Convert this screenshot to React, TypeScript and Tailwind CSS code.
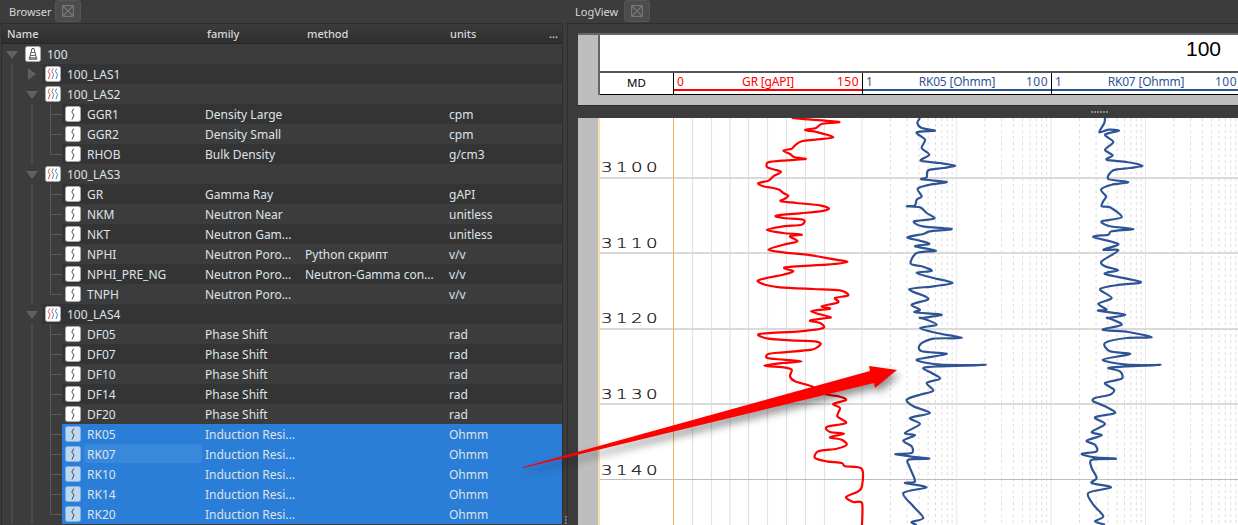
import React from "react";

type Row = { level: 0 | 1 | 2; kind: "well" | "las" | "curve"; name: string; family?: string; method?: string; units?: string; open?: boolean; last?: boolean; selected?: boolean; hover?: boolean; };

const c = (name: string, family: string, units: string, extra: Partial<Row> = {}): Row => ({ level: 2, kind: "curve", name, family, units, ...extra });
const las = (name: string, open: boolean): Row => ({ level: 1, kind: "las", name, open });

const rows: Row[] = [
  { level: 0, kind: "well", name: "100", open: true },
  las("100_LAS1", false),
  las("100_LAS2", true),
  c("GGR1", "Density Large", "cpm"),
  c("GGR2", "Density Small", "cpm"),
  c("RHOB", "Bulk Density", "g/cm3", { last: true }),
  las("100_LAS3", true),
  c("GR", "Gamma Ray", "gAPI"),
  c("NKM", "Neutron Near", "unitless"),
  c("NKT", "Neutron Gam...", "unitless"),
  c("NPHI", "Neutron Poro...", "v/v", { method: "Python скрипт" }),
  c("NPHI_PRE_NG", "Neutron Poro...", "v/v", { method: "Neutron-Gamma con..." }),
  c("TNPH", "Neutron Poro...", "v/v", { last: true }),
  las("100_LAS4", true),
  c("DF05", "Phase Shift", "rad"),
  c("DF07", "Phase Shift", "rad"),
  c("DF10", "Phase Shift", "rad"),
  c("DF14", "Phase Shift", "rad"),
  c("DF20", "Phase Shift", "rad"),
  c("RK05", "Induction Resi...", "Ohmm", { selected: true }),
  c("RK07", "Induction Resi...", "Ohmm", { selected: true, hover: true }),
  c("RK10", "Induction Resi...", "Ohmm", { selected: true }),
  c("RK14", "Induction Resi...", "Ohmm", { selected: true }),
  c("RK20", "Induction Resi...", "Ohmm", { selected: true, last: true }),
];

const Z1: number[][] = [[155,0],[215,5],[298,12],[245,18],[228,30],[195,36],[230,42],[280,58],[225,65],[185,70],[165,82],[155,92],[130,98],[150,108],[165,118],[197,123],[140,127],[85,133],[82,148],[105,155],[123,162],[100,175],[85,188],[55,196],[70,205],[100,210],[118,215],[130,225],[145,233],[135,242],[122,250],[170,255],[240,262],[267,272],[240,280],[180,286],[108,293],[130,300],[190,305],[185,320],[130,325],[80,336],[130,345],[185,350],[150,355],[172,370],[130,380],[85,395],[130,403],[200,410],[270,422],[322,432],[260,440],[135,448],[160,460],[130,470],[90,478],[53,488],[75,500],[120,508],[220,513],[300,517],[325,532],[285,540],[295,553],[245,565],[270,572],[213,580],[270,597]];
const Z2: number[][] = [[260,0],[210,8],[240,15],[250,30],[180,40],[58,48],[85,62],[170,68],[225,70],[242,78],[215,95],[130,103],[85,108],[82,120],[130,125],[185,130],[130,135],[73,143],[130,148],[155,155],[150,175],[165,190],[215,205],[255,228],[300,236],[318,246],[280,258],[300,270],[292,295],[318,315],[260,327],[270,342],[312,347],[270,358],[305,365],[320,380],[290,392],[235,400],[225,420],[260,430],[305,435],[315,445],[365,452],[366,505],[355,520],[318,537],[340,552],[366,555],[366,621]];
const B1: number[][] = [[540,0],[532,15],[545,30],[585,38],[530,43],[555,65],[545,90],[568,110],[542,128],[600,135],[645,143],[610,150],[565,157],[560,178],[545,184],[620,192],[570,200],[533,212],[545,235],[530,245],[525,262],[500,265],[540,268],[560,285],[583,302],[522,310],[548,325],[635,333],[570,340],[550,348],[502,358],[540,368],[568,378],[525,385],[588,398],[530,405],[512,437],[545,445],[575,458],[530,465],[580,480],[638,495],[580,505],[508,514],[555,535],[563,545],[515,560],[540,575],[525,583],[605,590],[545,600]];
const B2: number[][] = [[545,0],[590,20],[540,30],[590,45],[665,60],[580,62],[540,80],[545,100],[620,108],[530,125],[600,140],[738,141],[600,145],[550,150],[575,165],[600,182],[560,195],[580,218],[540,230],[500,245],[520,265],[570,285],[510,300],[540,318],[495,345],[525,352],[490,368],[515,385],[515,405],[466,408],[510,415],[568,422],[505,425],[510,450],[525,490],[495,495],[560,508],[490,525],[520,565],[550,600],[515,612],[530,621]];
const K1: number[][] = [[195,0],[193,15],[178,43],[205,35],[237,38],[195,50],[220,72],[195,95],[218,112],[200,125],[260,132],[307,143],[270,150],[220,157],[205,183],[265,192],[215,200],[183,215],[198,235],[190,250],[185,265],[210,268],[245,298],[185,310],[210,325],[280,333],[215,340],[205,350],[160,357],[235,378],[190,395],[235,397],[185,430],[195,445],[235,457],[195,468],[302,492],[240,500],[180,513],[215,540],[175,557],[200,575],[175,578],[255,590],[205,600]];
const K2: number[][] = [[205,0],[245,20],[188,35],[265,42],[335,58],[260,60],[195,75],[210,100],[270,108],[188,125],[260,140],[362,141],[260,145],[205,150],[240,160],[245,182],[195,195],[222,215],[210,230],[165,240],[160,250],[195,265],[225,285],[165,298],[195,318],[155,342],[185,352],[140,368],[165,380],[170,400],[125,408],[165,418],[228,422],[155,425],[155,450],[170,480],[155,495],[213,508],[145,525],[160,560],[190,595],[165,610],[195,620]];

const smooth = (a: number[][], b: number[][], x0: number) => {
  const p = [...a.map(([x, y]) => [x0 + x / 3, 118 + y / 3]), ...b.map(([x, y]) => [x0 + x / 3, 318 + y / 3])];
  const t = 0.14;
  let d = `M${p[0][0].toFixed(1)} ${p[0][1].toFixed(1)}`;
  for (let i = 0; i < p.length - 1; i++) {
    const p0 = p[Math.max(0, i - 1)];
    const p1 = p[i];
    const p2 = p[i + 1];
    const p3 = p[Math.min(p.length - 1, i + 2)];
    const c1x = p1[0] + (p2[0] - p0[0]) * t;
    const c1y = p1[1] + (p2[1] - p0[1]) * t;
    const c2x = p2[0] - (p3[0] - p1[0]) * t;
    const c2y = p2[1] - (p3[1] - p1[1]) * t;
    d += `C${c1x.toFixed(1)} ${c1y.toFixed(1)} ${c2x.toFixed(1)} ${c2y.toFixed(1)} ${p2[0].toFixed(1)} ${p2[1].toFixed(1)}`;
  }
  return d;
};

const Tri = ({ open }: { open?: boolean }) =>
  open ? (
    <svg width="12" height="8" viewBox="0 0 12 8" className="shrink-0"><path d="M0 0H12L6 8Z" fill="#606060" /></svg>
  ) : (
    <svg width="8" height="12" viewBox="0 0 8 12" className="shrink-0"><path d="M0 0L8 6L0 12Z" fill="#606060" /></svg>
  );

const Icon = ({ kind, selected }: { kind: Row["kind"]; selected?: boolean }) => (
  <svg width="16" height="16" viewBox="0 0 16 16" className="shrink-0">
    <rect x="0.5" y="0.5" width="15" height="15" rx="2" fill={selected ? "#bcd8f3" : "#ffffff"} stroke={selected ? "#7fb0e4" : "#a8a8a8"} />
    {kind === "curve" && <path d="M8.8 2.5L6.8 6L9 9L7 13.5" fill="none" stroke="#4a4a4a" strokeWidth="1" />}
    {kind === "las" && (
      <g fill="none" strokeWidth="1">
        <path d="M4.8 2.5L3.2 5.5L5 8.5L3.4 13" stroke="#e2524f" />
        <path d="M8.2 2.5L6.8 5.5L8.7 8.5L7.2 13" stroke="#7a7a7a" />
        <path d="M11.6 2.5L10.4 5.5L12.6 8.5L11 13" stroke="#3f7fd0" />
      </g>
    )}
    {kind === "well" && (
      <g fill="none" stroke="#555555">
        <path d="M7 2.5H9L11.5 12.5H4.5Z" strokeWidth="1" />
        <path d="M6.2 6.5H9.8M5.4 9.5H10.6" strokeWidth="0.9" />
        <path d="M4 11.5H12V13.5H4Z" fill="#8a8a8a" strokeWidth="0.5" />
      </g>
    )}
  </svg>
);

const nameWidth = { 0: "w-[183px]", 1: "w-[163px]", 2: "w-[143px]" };

const TreeRow = ({ row, index }: { row: Row; index: number }) => {
  const striped = index % 2 === 1;
  const bg = row.selected ? "bg-[#2a7ed8]" : striped ? "bg-[#343434]" : "bg-[#3c3c3c]";
  return (
    <div className="flex h-5 w-full text-[12px] leading-5">
      <div className="relative h-5 w-5 shrink-0">
        {row.level > 0 && <div className="absolute left-[9px] top-0 bottom-0 w-[2px] bg-[#4a4a4a]" />}
        {row.level === 0 && <div className="absolute left-[4px] top-[7px] flex"><Tri open /></div>}
      </div>
      {row.level >= 1 && (
        <div className="relative h-5 w-5 shrink-0">
          {row.level === 2 && <div className="absolute left-[9px] top-0 bottom-0 w-[2px] bg-[#4a4a4a]" />}
          {row.level === 1 && <div className={row.open ? "absolute left-[4px] top-[7px] flex" : "absolute left-[6px] top-[4px] flex"}><Tri open={row.open} /></div>}
        </div>
      )}
      {row.level === 2 && (
        <div className="relative h-5 w-5 shrink-0">
          <div className={row.last ? "absolute left-[8px] top-0 h-[11px] w-px bg-[#5a5a5a]" : "absolute left-[8px] top-0 bottom-0 w-px bg-[#5a5a5a]"} />
          <div className="absolute left-[8px] right-0 top-[10px] h-px bg-[#5a5a5a]" />
        </div>
      )}
      <div className={`relative flex flex-1 min-w-0 items-center ${bg} text-[#dfe3e8]`}>
        {row.hover && <div className="absolute left-[22px] top-0 h-[19px] w-[118px] rounded-[2px] bg-[#3a88dc]" />}
        <div className={`relative flex shrink-0 items-center gap-[6px] pl-[3px] ${nameWidth[row.level]}`}>
          <Icon kind={row.kind} selected={row.selected} />
          <span className="whitespace-nowrap pt-px">{row.name}</span>
        </div>
        <div className="relative w-[100px] shrink-0 whitespace-nowrap pt-px">{row.family}</div>
        <div className="relative w-[144px] shrink-0 whitespace-nowrap pt-px">{row.method}</div>
        <div className="relative whitespace-nowrap pt-px">{row.units}</div>
      </div>
    </div>
  );
};

const CloseBtn = () => (
  <div className="flex h-[22px] w-[26px] items-center justify-center rounded-[3px] border border-[#555555] bg-[#4c4c4c]">
    <svg width="12" height="12" viewBox="0 0 12 12" fill="none" stroke="#767676" strokeWidth="1.3">
      <rect x="0.6" y="0.6" width="10.8" height="10.8" rx="1" />
      <path d="M1 1L11 11M11 1L1 11" />
    </svg>
  </div>
);

const TitleBar = ({ title, indent, w }: { title: string; indent: string; w: string }) => (
  <div className={`flex h-[23px] shrink-0 items-start gap-[5px] ${indent}`}>
    <span className={`pt-[3px] text-[11px] leading-[18px] text-[#d8d8d8] ${w}`}>{title}</span>
    <CloseBtn />
  </div>
);

const TrackHead = ({ left, mid, right, color, line, w }: { left: string; mid: string; right: string; color: string; line: string; w: string }) => (
  <div className={`relative h-full shrink-0 border-r border-black ${w} ${color}`}>
    <div className="grid h-[16px] grid-cols-[1fr_auto_1fr] items-center px-[3px] text-[12px] leading-[16px]">
      <span className="tracking-[0.5px]">{left}</span>
      <span className="pt-px tracking-[-0.2px]">{mid}</span>
      <span className="text-right tracking-[0.5px]">{right}</span>
    </div>
    <div className={`h-[2px] w-full ${line}`} />
  </div>
);

const hLines = [178, 253, 329, 404];
const grVert = [692.5, 711.5, 730, 748.5, 767.5, 786.5, 805.5, 824.5];
const logOff = [2, 3, 4, 5, 6, 7, 8, 9].map((k) => 94.5 * Math.log10(k));
const depthLabels: [string, number][] = [["3100", 172], ["3110", 248], ["3120", 323], ["3130", 399], ["3140", 475]];

const Chart = () => (
  <svg viewBox="598 118 640 407" className="block h-[407px] w-[640px] bg-white">
    {grVert.map((x) => <line key={x} x1={x} x2={x} y1={118} y2={525} stroke="#e2e2e2" strokeWidth="1.2" />)}
    {[862, 1051].map((t) => (
      <g key={t}>
        {[0, 94.5].map((d) => logOff.map((o) => (
          <line key={`${d}-${o}`} x1={t + d + o} x2={t + d + o} y1={118} y2={525} stroke="#dedede" strokeWidth="1" strokeDasharray="3 3" />
        )))}
        <line x1={t + 94.5} x2={t + 94.5} y1={118} y2={525} stroke="#ebebeb" strokeWidth="1.2" />
        <line x1={t} x2={t} y1={118} y2={525} stroke="#e8e8e8" strokeWidth="1.2" />
      </g>
    ))}
    {hLines.map((y) => <line key={y} x1={598} x2={1238} y1={y} y2={y} stroke="#dadada" strokeWidth="2" />)}
    <line x1={598} x2={1238} y1={479.5} y2={479.5} stroke="#bdbdbd" strokeWidth="1" />
    <line x1={599} x2={599} y1={118} y2={525} stroke="#fbdcae" strokeWidth="2" />
    <line x1={673.5} x2={673.5} y1={118} y2={525} stroke="#f0b662" strokeWidth="1" />
    {depthLabels.map(([t, y]) => (
      <text key={t} transform={`translate(601 ${y}) scale(1.3 1)`} fontFamily="'DejaVu Sans', sans-serif" fontWeight="200" fontSize="14" letterSpacing="2.65" fill="#000000" stroke="#000000" strokeWidth="0.2">{t}</text>
    ))}
    <path d={smooth(Z1, Z2, 740)} fill="none" stroke="#ff0000" strokeWidth="2.2" strokeLinejoin="round" />
    <path d={smooth(B1, B2, 740)} fill="none" stroke="#2f5496" strokeWidth="2.2" strokeLinejoin="round" />
    <path d={smooth(K1, K2, 1040)} fill="none" stroke="#2f5496" strokeWidth="2.2" strokeLinejoin="round" />
  </svg>
);

export default function App() {
  return (
    <div className="relative flex h-[525px] w-[1238px] overflow-hidden bg-[#3c3c3c] font-['Noto_Sans','Open_Sans',sans-serif]">
      <aside className="flex h-full w-[563px] shrink-0 flex-col">
        <TitleBar title="Browser" indent="pl-[9px]" w="w-[41px]" />
        <div className="ml-px flex flex-1 min-h-0 flex-col border-l border-r border-t border-[#2e2e2e]">
          <div className="relative h-5 shrink-0 border-b border-[#262626] bg-gradient-to-b from-[#3b3b3b] to-[#2e2e2e] text-[11px] font-medium leading-[19px] text-[#d8d8d8]">
            <span className="absolute left-[5px]">Name</span>
            <span className="absolute left-[205px]">family</span>
            <span className="absolute left-[305px]">method</span>
            <span className="absolute left-[448px]">units</span>
            <span className="absolute left-[547px]">...</span>
          </div>
          <div>
            {rows.map((r, i) => <TreeRow key={r.name} row={r} index={i} />)}
          </div>
        </div>
      </aside>

      <div className="flex h-full w-[4px] shrink-0 flex-col justify-end gap-[1px] pb-[1px] pl-[2px] pt-[23px]">
        {[0, 1, 2].map((i) => <div key={i} className="h-[2px] w-[2px] bg-[#777777]" />)}
      </div>

      <main className="flex h-full min-w-0 flex-1 flex-col">
        <TitleBar title="LogView" indent="pl-[8px]" w="w-[44px]" />
        <div className="flex min-h-0 flex-1 flex-col border-l border-t border-[#2e2e2e] pl-[10px] pt-[9px]">
          <div className="flex h-[73px] shrink-0 border-b border-[#2a2a2a] bg-[#bebebe]">
            <div className="w-[20px] shrink-0 border-t-2 border-[#666666]" />
            <div className="flex h-[62px] flex-1 flex-col border-l-2 border-t-2 border-[#666666] bg-white">
              <div className="flex h-[36px] items-start justify-end pr-[20px] font-['Liberation_Sans',sans-serif] text-[21px] leading-[28px] text-black">100</div>
              <div className="flex h-[24px] border-b border-t-2 border-b-black border-t-[#555555] text-[12px]">
                <div className="flex w-[74px] shrink-0 items-center justify-center border-r border-black pb-px text-[11.5px] text-black">MD</div>
                <TrackHead left="0" mid="GR [gAPI]" right="150" color="text-[#ff0000]" line="bg-[#ff0000]" w="w-[189px]" />
                <TrackHead left="1" mid="RK05 [Ohmm]" right="100" color="text-[#2f5496]" line="bg-[#2f5496]" w="w-[189px]" />
                <TrackHead left="1" mid="RK07 [Ohmm]" right="100" color="text-[#2f5496]" line="bg-[#2f5496]" w="w-[189px]" />
              </div>
            </div>
          </div>
          <div className="flex h-[12px] shrink-0 items-center pl-[513px]">
            <div className="h-[2px] w-[17px] bg-[repeating-linear-gradient(90deg,#8a8a8a_0,#8a8a8a_2px,transparent_2px,transparent_3px)]" />
          </div>
          <div className="flex min-h-0 flex-1">
            <div className="w-[20px] shrink-0 bg-[#bebebe]" />
            <Chart />
          </div>
        </div>
      </main>

      <svg className="pointer-events-none absolute left-0 top-0 drop-shadow-[3px_5px_4px_rgba(0,0,0,0.45)]" width="1238" height="525" viewBox="0 0 1238 525">
        <polygon points="523,467 870,371 869,366 897,370 875,388 874,383 523,468" fill="#ff0000" />
      </svg>
    </div>
  );
}
